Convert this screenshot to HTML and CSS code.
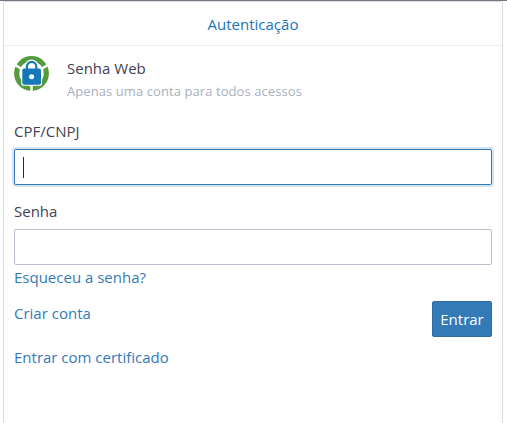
FILE: index.html
```html
<!DOCTYPE html>
<html lang="pt-BR">
<head>
<meta charset="utf-8">
<title>Autenticação</title>
<link rel="stylesheet" href="styles.css">
</head>
<body>
<main class="card">
  <header class="card-header"><span class="title">Autenticação</span></header>
  <div class="card-body">
    <div class="brand">
      <svg class="logo" viewBox="0 0 35 35" aria-hidden="true">
        <circle cx="17.5" cy="17.5" r="14.8" fill="none" stroke="#549b3d" stroke-width="5.2"/>
        <path d="M17.5 18V35M17.5 19L1 8.8M17.5 19L34 8.8" stroke="#fff" stroke-width="2.6"/>
        <path d="M12.9 14V10.5a4.7 4.7 0 0 1 9.4 0V14" fill="#fff" stroke="#fff" stroke-width="4.6"/>
        <rect x="7.3" y="11.3" width="20.6" height="18.5" rx="2.6" fill="#fff"/>
        <path d="M12.9 14V10.6a4.7 4.7 0 0 1 9.4 0V14" fill="none" stroke="#1478b9" stroke-width="2.2"/>
        <rect x="8.3" y="12.4" width="18.7" height="16.3" rx="1.8" fill="#1478b9"/>
        <circle cx="17.6" cy="20.7" r="2.5" fill="#fff"/>
      </svg>
      <div class="brand-text">
        <div class="name"><span>Senha Web</span></div>
        <div class="tagline"><span>Apenas uma conta para todos acessos</span></div>
      </div>
    </div>
    <form>
      <label class="label" for="doc"><span>CPF/CNPJ</span></label>
      <div class="field"><input class="input focused" id="doc" type="text"><span class="caret"></span></div>
      <label class="label label-password" for="pass"><span>Senha</span></label>
      <div class="field"><input class="input" id="pass" type="password"></div>
      <a class="link forgot" href="#">Esqueceu a senha?</a>
      <div class="actions">
        <a class="link create" href="#">Criar conta</a>
        <button class="submit" type="button">Entrar</button>
      </div>
      <a class="link certificate" href="#">Entrar com certificado</a>
    </form>
  </div>
</main>
</body>
</html>
```
FILE: styles.css
```css
* { box-sizing: border-box; }
html { overflow: hidden; background: #fff; }
body {
  margin: 0;
  height: 423px;
  overflow: hidden;
  border-top: 1px solid #77757d;
  font: 15px/20px "Open Sans", "Noto Sans", sans-serif;
  color: #3f4254;
}
.card {
  width: 500px;
  height: 440px;
  margin-left: 3px;
  border: 1px solid #dbdae3;
  border-radius: 2px;
}
.card-header {
  height: 44px;
  padding-top: 12px;
  border-bottom: 1px solid #ecedf2;
  text-align: center;
  color: #1b75bb;
}
.card-body { padding: 10px 10px 0; }
.brand { display: flex; gap: 18px; height: 60px; }
.logo { width: 35px; height: 35px; flex: none; }
.brand-text { padding-top: 2px; }
.name { height: 23px; }
.tagline { font-size: 13px; letter-spacing: 0.08px; color: #a9b0be; }
.label { display: block; height: 33px; padding-top: 5px; }
.label-password { height: 44px; padding-top: 16px; }
.field { position: relative; height: 36px; }
.input {
  display: block;
  width: 100%;
  height: 36px;
  padding: 0 8px;
  border: 1px solid #bbbfcd;
  border-radius: 2px;
  background: #fff;
  font: inherit;
  outline: none;
}
.focused { border-color: #337ab7; box-shadow: 0 0 0 2px #d6e4f1; }
.caret { position: absolute; left: 9px; top: 8px; width: 1px; height: 21px; background: #282a3a; }
.link { display: block; color: #337ab7; text-decoration: none; }
.forgot { height: 36px; padding-top: 2px; }
.actions { display: flex; justify-content: space-between; height: 43px; }
.create { padding-top: 2px; }
.submit {
  width: 60px;
  height: 36px;
  padding: 0 0 1px;
  border: 1px solid #2e6da4;
  border-radius: 2px;
  background: #337ab7;
  color: #fff;
  font: inherit;
}
.certificate { padding-top: 3px; }
```
